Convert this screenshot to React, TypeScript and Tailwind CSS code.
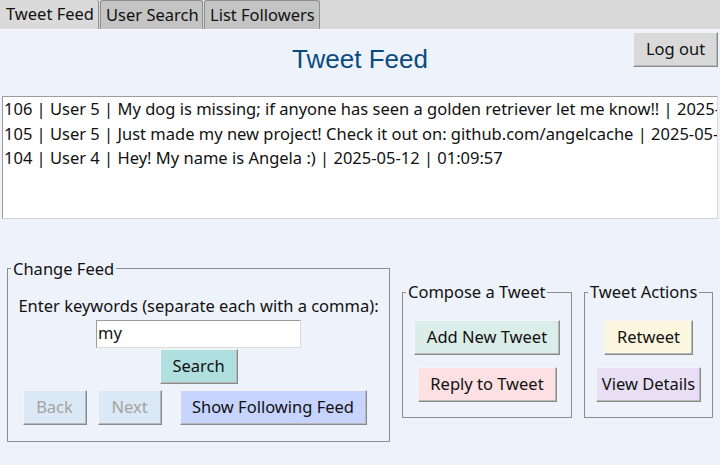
import React from "react";

const font = { fontFamily: '"Noto Sans", "Open Sans", sans-serif' };

function Btn({ children, className = "", disabled = false }: { children: React.ReactNode; className?: string; disabled?: boolean }) {
  return (
    <div
      className={
        "h-[35px] flex items-center justify-center whitespace-nowrap text-[16.5px] border border-t-[#f4f4f4] border-l-[#f4f4f4] border-b-[#8a8a8a] border-r-[#8a8a8a] shadow-[inset_-1px_-1px_0_#b8b8b8] " +
        (disabled ? "text-[#a3a3a3] " : "text-[#111] ") +
        className
      }
    >
      {children}
    </div>
  );
}

function Frame({ title, children, className = "" }: { title: string; children: React.ReactNode; className?: string }) {
  return (
    <fieldset className={"border border-[#8e8e8e] m-0 px-0 pb-0 pt-0 " + className}>
      <legend className="ml-[3px] px-[2px] text-[16.5px] leading-[20px] text-[#111]">{title}</legend>
      {children}
    </fieldset>
  );
}

export default function App() {
  const tweets = [
    "106 | User 5 | My dog is missing; if anyone has seen a golden retriever let me know!! | 2025-05-12 | 01:20:11",
    "105 | User 5 | Just made my new project! Check it out on: github.com/angelcache | 2025-05-12 | 01:15:32",
    "104 | User 4 | Hey! My name is Angela :) | 2025-05-12 | 01:09:57",
  ];
  return (
    <div className="w-[720px] h-[465px] bg-[#eef2fa] flex flex-col overflow-hidden text-[#111]" style={font}>
      {/* Tabs */}
      <div className="h-[30px] bg-[#d9d9d9] flex items-end shrink-0 border-b border-[#f8f8f8]">
        <div className="h-[29px] w-[99px] bg-[#dadada] border-r border-[#8e8e8e] rounded-tr-[3px] flex items-center pl-[6px] text-[16.5px] whitespace-nowrap">
          Tweet Feed
        </div>
        <div className="h-[29px] ml-[1px] w-[103px] bg-[#c4c4c4] border border-b-0 border-[#8e8e8e] rounded-t-[3px] flex items-center pl-[5px] text-[16.5px] whitespace-nowrap">
          User Search
        </div>
        <div className="h-[29px] ml-[1px] w-[116px] bg-[#c4c4c4] border border-b-0 border-[#8e8e8e] rounded-t-[3px] flex items-center pl-[5px] text-[16.5px] whitespace-nowrap">
          List Followers
        </div>
      </div>

      {/* Header */}
      <div className="h-[66px] shrink-0 grid grid-cols-[1fr_auto_1fr]">
        <div />
        <div
          className="text-[26px] text-[#0b4a80] leading-[30px] pt-[14px]"
          style={{ fontFamily: '"Liberation Sans", Arial, sans-serif' }}
        >
          Tweet Feed
        </div>
        <div className="flex justify-end items-start pt-[2px] pr-[2px]">
          <Btn className="bg-[#d9d9d9] w-[85px]">Log out</Btn>
        </div>
      </div>

      {/* Listbox */}
      <div className="mx-[2px] h-[123px] shrink-0 bg-white border border-t-[#9c9c9c] border-l-[#9c9c9c] border-r-[#dcdcdc] border-b-[#d4d4d4] overflow-hidden">
        {tweets.map((t) => (
          <div key={t} className="whitespace-nowrap text-[16.5px] leading-[24.5px] pl-[1px]">
            {t}
          </div>
        ))}
      </div>

      {/* Bottom */}
      <div className="flex-1 flex items-center px-[7px] gap-[12px] pt-[16px]">
        <Frame title="Change Feed" className="w-[383px] h-[183px]">
          <div className="flex flex-col items-center pt-[16px]">
            <div className="text-[16.5px] leading-[22px] whitespace-nowrap">Enter keywords (separate each with a comma):</div>
            <div className="mt-[3px] w-[205px] h-[28px] bg-white border border-t-[#9c9c9c] border-l-[#9c9c9c] border-r-[#dcdcdc] border-b-[#dcdcdc] text-[16.5px] leading-[24px] pl-[1px]">
              my
            </div>
            <Btn className="bg-[#b0dfe0] mt-[1px] w-[78px]">Search</Btn>
            <div className="flex mt-[6px] ml-[-8px]">
              <Btn disabled className="bg-[#dbe8f5] w-[64px]">Back</Btn>
              <Btn disabled className="bg-[#dbe8f5] w-[64px] ml-[11px]">Next</Btn>
              <Btn className="bg-[#c6d4ff] w-[187px] ml-[18px]">Show Following Feed</Btn>
            </div>
          </div>
        </Frame>
        <Frame title="Compose a Tweet" className="w-[170px] h-[136px]">
          <div className="flex flex-col items-center pt-[18px] gap-[12px]">
            <Btn className="bg-[#dbede8] w-[146px]">Add New Tweet</Btn>
            <Btn className="bg-[#fde0e3] w-[139px]">Reply to Tweet</Btn>
          </div>
        </Frame>
        <Frame title="Tweet Actions" className="w-[129px] h-[136px]">
          <div className="flex flex-col items-center pt-[18px] gap-[12px]">
            <Btn className="bg-[#fdf6de] w-[89px]">Retweet</Btn>
            <Btn className="bg-[#e8dff5] w-[105px]">View Details</Btn>
          </div>
        </Frame>
      </div>
    </div>
  );
}
